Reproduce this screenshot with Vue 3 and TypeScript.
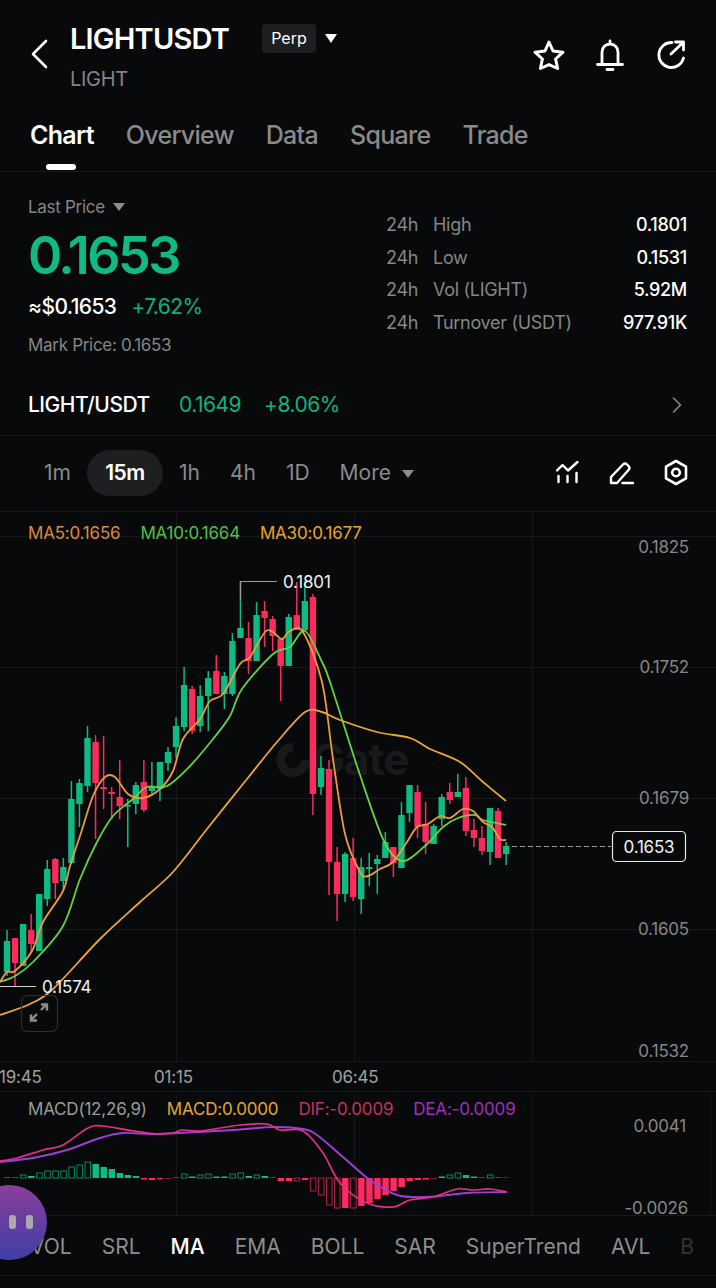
<script setup lang="ts">
type Candle = [number, number, number, number, number, number]
// index, wick top, body top, body bottom, wick bottom, 1 = green / 0 = red
const raw: Candle[] = [
  [0,931,942,973,977,1],[1,939,939,964,987,0],[2,925,925,967,967,1],[3,915,931,945,953,0],[4,895,895,952,952,1],
  [5,861,870,900,907,1],[6,859,860,884,900,0],[7,859,868,882,892,1],[8,782,800,864,865,1],[9,780,784,805,828,1],
  [10,727,739,787,793,1],[11,736,743,784,840,0],[12,737,788,790,810,0],[13,788,793,795,820,0],[14,761,798,807,820,0],
  [15,800,806,807,848,1],[16,783,786,805,815,1],[17,761,783,811,813,0],[18,763,787,792,795,1],[19,763,763,790,802,1],
  [20,748,753,764,772,1],[21,718,727,748,759,1],[22,668,686,728,732,1],[23,687,690,732,735,0],[24,686,697,727,733,1],
  [25,672,679,697,732,1],[26,656,672,695,695,0],[27,673,677,695,710,1],[28,634,642,695,697,1],[29,582,629,639,639,1],
  [30,623,639,662,675,0],[31,603,616,662,662,1],[32,602,612,619,648,0],[33,617,620,637,652,0],[34,640,640,667,702,0],
  [35,615,618,667,667,1],[36,583,616,631,631,0],[37,582,602,631,631,1],[38,595,598,795,816,0],[39,757,769,788,796,1],
  [40,761,770,863,896,0],[41,848,863,895,922,0],[42,853,855,895,903,1],[43,839,859,898,902,0],[44,859,868,900,915,1],
  [45,854,868,870,887,1],[46,856,860,865,895,1],[47,833,843,859,859,1],[48,848,848,864,878,0],[49,803,816,869,869,1],
  [50,786,786,814,823,1],[51,786,793,828,839,0],[52,803,825,843,855,0],[53,825,827,845,845,1],[54,795,798,820,827,1],
  [55,784,793,801,805,0],[56,775,793,798,798,1],[57,778,789,832,837,0],[58,820,831,839,848,0],[59,827,839,852,856,0],
  [60,809,809,853,866,1],[61,809,812,859,859,0],[62,843,847,855,866,1],
]
const GREEN = '#0fbb83'
const RED = '#fb2b5e'
const candles = raw.map(([i, wt, bt, bb, wb, g]) => ({
  x: 7 + 8.05 * i, wt, bt, bb: Math.max(bb, bt + 1.5), wb, c: g ? GREEN : RED,
}))

type P = [number, number]
function smooth(pts: P[], t = 0.16): string {
  let d = `M${pts[0][0]} ${pts[0][1]}`
  for (let i = 0; i < pts.length - 1; i++) {
    const p0 = pts[Math.max(i - 1, 0)]
    const p1 = pts[i]
    const p2 = pts[i + 1]
    const p3 = pts[Math.min(i + 2, pts.length - 1)]
    const c1x = p1[0] + (p2[0] - p0[0]) * t
    const c1y = p1[1] + (p2[1] - p0[1]) * t
    const c2x = p2[0] - (p3[0] - p1[0]) * t
    const c2y = p2[1] - (p3[1] - p1[1]) * t
    d += ` C${c1x.toFixed(1)} ${c1y.toFixed(1)} ${c2x.toFixed(1)} ${c2y.toFixed(1)} ${p2[0]} ${p2[1]}`
  }
  return d
}
const ma30 = smooth([[0,1016],[30,1005],[53,990],[100,940],[140,903],[173,873],[207,830],[247,780],[277,743],[305,713],[322,713],[340,721],[377,733],[410,739],[430,750],[460,763],[483,783],[506,802]])
const ma10 = smooth([[0,983],[15,977],[33,963],[63,927],[80,880],[97,843],[113,817],[133,800],[147,788],[167,787],[190,767],[213,740],[230,717],[242,690],[273,655],[290,648],[305,632],[322,663],[330,683],[358,770],[383,840],[402,862],[425,847],[443,828],[458,819],[475,816],[483,821],[506,826]])
const ma5 = smooth([[0,983],[7,973],[15,972],[32,952],[43,923],[63,892],[70,867],[80,837],[93,797],[105,778],[115,778],[128,795],[143,799],[160,790],[173,772],[183,740],[200,720],[210,702],[223,695],[240,665],[250,658],[265,633],[273,633],[282,640],[290,632],[303,633],[322,683],[333,760],[345,835],[360,873],[368,877],[380,870],[393,863],[407,843],[417,828],[428,825],[440,817],[450,819],[463,810],[473,812],[483,823],[492,828],[500,840],[506,841]])
const dif = smooth([[0,1161],[17,1158],[43,1150],[63,1145],[88,1128],[103,1126],[133,1131],[157,1134],[173,1133],[182,1130],[200,1131],[240,1125],[267,1124],[280,1130],[303,1131],[323,1153],[340,1183],[367,1203],[393,1207],[410,1200],[433,1197],[457,1189],[473,1190],[490,1189],[507,1192]])
const dea = smooth([[0,1162],[33,1158],[67,1150],[100,1138],[123,1133],[157,1134],[233,1130],[273,1127],[303,1129],[317,1135],[343,1157],[370,1180],[397,1195],[427,1197],[467,1193],[507,1192]])

// histogram: signed height, h = hollow
const histRaw: (number | string)[] = [
  0.6,0.6,'3',2,'5','7','7','7','11','13','16',14,11,9,5,3,2,-1.5,-2,-1,-0.5,0.5,'4',1.5,'3','4',1.5,1.5,'4','5',2,'3',2,0.5,
  -3,-3,'-3',-2,'-13','-17','-27','-30',-30,'-30',-28,-25,-21,-17,-13,-9,-3,-2,-1.5,-0.5,1.5,'3','5',3,1.5,0.5,'3',0.5,0.3,
]
const hist = histRaw.map((v, i) => {
  const hollow = typeof v === 'string'
  const n = Number(v)
  const base = n >= 0 ? 1178 - n : 1178
  return { x: 7 + 8.05 * i - 3, y: base, h: Math.abs(n), hollow, c: n >= 0 ? GREEN : RED }
})

const tabs = ['Chart', 'Overview', 'Data', 'Square', 'Trade']
const stats = [
  ['High', '0.1801'], ['Low', '0.1531'], ['Vol (LIGHT)', '5.92M'], ['Turnover (USDT)', '977.91K'],
]
const intervals = ['1m', '15m', '1h', '4h', '1D']
const indicators = ['VOL', 'SRL', 'MA', 'EMA', 'BOLL', 'SAR', 'SuperTrend', 'AVL', 'B']
const axis: [string, number][] = [['0.1825', 554], ['0.1752', 674], ['0.1679', 805], ['0.1605', 936], ['0.1532', 1058]]
const gridH = [537, 668, 799, 930]
const gridV = [176, 354, 532]
const times: [string, number][] = [['19:45', -1], ['01:15', 154], ['06:45', 332]]
</script>

<template>
  <div class="page">
    <header class="head">
      <svg class="back" width="18" height="30" viewBox="0 0 18 30" fill="none"><path d="M16 2 3 15l13 13" stroke="#fff" stroke-width="2.6" stroke-linecap="round" stroke-linejoin="round"/></svg>
      <div class="title-block">
        <div class="title-row">
          <span class="title">LIGHTUSDT</span>
          <span class="perp">Perp</span>
          <span class="tri tri-white"></span>
        </div>
        <div class="subtitle">LIGHT</div>
      </div>
      <div class="head-icons">
        <svg width="32" height="32" viewBox="0 0 32 32" fill="none"><path d="M16 3l4 9 10 1.2-7.4 6.8 2 9.5L16 25.6l-8.6 3.9 2-9.5L2 13.2 12 12z" stroke="#fff" stroke-width="3" stroke-linejoin="round"/></svg>
        <svg width="30" height="32" viewBox="0 0 30 32" fill="none"><path d="M7 25V13a8 8 0 0 1 16 0v12M2.5 25.500h25M12 30.500h6M15 2v3" stroke="#fff" stroke-width="2.800" stroke-linecap="round"/></svg>
        <svg width="32" height="32" viewBox="0 0 32 32" fill="none"><path d="M17 3.500A12.500 12.500 0 1 0 28.500 19M16 15 28 3.500M20.500 3h8v8" stroke="#fff" stroke-width="2.800" stroke-linecap="round" stroke-linejoin="round"/></svg>
      </div>
    </header>

    <nav class="tabs">
      <span v-for="(t, i) in tabs" :key="t" class="tab" :class="{ active: i === 0 }">{{ t }}</span>
    </nav>

    <section class="stats">
      <div class="stat-left">
        <div class="muted last">Last Price <span class="tri tri-grey small"></span></div>
        <div class="price">0.1653</div>
        <div class="sub"><span class="usd">≈$0.1653</span><span class="green">+7.62%</span></div>
        <div class="muted mark">Mark Price: 0.1653</div>
      </div>
      <div class="stat-right">
        <div v-for="s in stats" :key="s[0]" class="stat-row">
          <span class="h24">24h</span><span class="stat-name">{{ s[0] }}</span><span class="stat-val">{{ s[1] }}</span>
        </div>
      </div>
    </section>

    <section class="pair">
      <span class="pair-name">LIGHT/USDT</span>
      <span class="green pair-price">0.1649</span>
      <span class="green">+8.06%</span>
      <svg class="pair-arrow" width="12" height="18" viewBox="0 0 12 18" fill="none"><path d="M2.500 2l7 7-7 7" stroke="#8a8a8a" stroke-width="1.600" stroke-linecap="round" stroke-linejoin="round"/></svg>
    </section>

    <section class="intervals">
      <span v-for="(v, i) in intervals" :key="v" class="iv" :class="{ on: i === 1 }">{{ v }}</span>
      <span class="iv more">More <span class="tri tri-grey"></span></span>
      <div class="iv-icons">
        <svg width="24" height="23" viewBox="0 0 24 23" fill="none" stroke="#fff" stroke-width="2.400" stroke-linecap="round" stroke-linejoin="round"><path d="M1 9.500 6.500 4l5.500 5.500L21.500 1"/><path d="M2.500 15v6M11.500 15v6M20.500 12v9"/></svg>
        <svg width="26" height="24" viewBox="0 0 26 24" fill="none" stroke="#fff" stroke-width="2.400" stroke-linecap="round" stroke-linejoin="round"><path d="M2 22v-6L14 3.500q2-2 4 0l1.500 1.500q2 2 0 4L8 22zM13.500 22H24"/></svg>
        <svg width="24" height="27" viewBox="0 0 24 27" fill="none" stroke="#fff" stroke-width="2.600" stroke-linejoin="round"><path d="M12 2l10 5.700v11.600L12 25 2 19.300V7.700z"/><circle cx="12" cy="13.500" r="3.800"/></svg>
      </div>
    </section>

    <section class="chart">
      <svg class="canvas" width="716" height="579" viewBox="0 513 716 579">
        <g stroke="#17181a" stroke-width="1">
          <line v-for="y in gridH" :key="y" x1="0" x2="716" :y1="y + 0.5" :y2="y + 0.5"/>
          <line v-for="x in gridV" :key="x" :x1="x + 0.5" :x2="x + 0.5" y1="513" y2="1062"/>
          <line x1="0" x2="716" y1="1062.500" y2="1062.500"/>
        </g>
        <g fill="#17191b">
          <path d="M293 744a17 17 0 1 0 17 17h-9a8 8 0 1 1-8-8z"/>
          <text x="312" y="776" font-size="44" font-weight="700" class="wm">Gate</text>
        </g>
        <g v-for="(c, i) in candles" :key="i">
          <line :x1="c.x" :x2="c.x" :y1="c.wt" :y2="c.wb" :stroke="c.c" stroke-width="1.500"/>
          <rect :x="c.x - 3.200" :y="c.bt" width="6.400" :height="c.bb - c.bt" :fill="c.c"/>
        </g>
        <path :d="ma30" fill="none" stroke="#eda535" stroke-width="1.800"/>
        <path :d="ma10" fill="none" stroke="#67d13f" stroke-width="1.800"/>
        <path :d="ma5" fill="none" stroke="#ee9a3f" stroke-width="1.800"/>

        <path d="M240.500 600V582.500H277" fill="none" stroke="#9a9a9a" stroke-width="1.200"/>
        <text x="283" y="589" class="lbl white">0.1801</text>
        <line x1="0" x2="36" y1="987.500" y2="987.500" stroke="#cfcfcf" stroke-width="1.200"/>
        <text x="42" y="994" class="lbl white">0.1574</text>

        <rect x="21.500" y="996.500" width="36" height="36" rx="6" fill="none" stroke="#2b2c2e" stroke-width="1.200"/>
        <path d="M31 1021l6-6M31 1015.500v6h6M41 1011l6-6M41 1005.500h6v6" transform="translate(0 0)" fill="none" stroke="#8d8d8d" stroke-width="2.400"/>

        <text v-for="a in axis" :key="a[0]" x="689" :y="a[1]" text-anchor="end" class="lbl axis">{{ a[0] }}</text>
        <line x1="512" x2="611" y1="847.500" y2="847.500" stroke="#9c9c9c" stroke-width="1.200" stroke-dasharray="5 3"/>
        <rect x="612.500" y="832.500" width="73" height="30" rx="4" fill="#08090a" stroke="#e6e6e6" stroke-width="1.200"/>
        <text x="649" y="854" text-anchor="middle" class="lbl white">0.1653</text>
        <text v-for="t in times" :key="t[0]" :x="t[1]" y="1084" class="lbl time">{{ t[0] }}</text>
      </svg>
      <div class="legend">
        <span class="ma5">MA5:0.1656</span><span class="ma10">MA10:0.1664</span><span class="ma30">MA30:0.1677</span>
      </div>
    </section>

    <section class="macd">
      <svg class="canvas" width="716" height="124" viewBox="0 1092 716 124">
        <g stroke="#151618" stroke-width="1">
          <line v-for="x in gridV" :key="x" :x1="x + 0.5" :x2="x + 0.5" y1="1093" y2="1216"/>
          <line x1="710.500" x2="710.500" y1="1093" y2="1216"/>
        </g>
        <g v-for="(b, i) in hist" :key="i">
          <rect v-if="b.hollow" :x="b.x + 0.5" :y="b.y" width="5.500" :height="b.h" fill="none" :stroke="b.c" stroke-opacity="0.7" stroke-width="1"/>
          <rect v-else :x="b.x" :y="b.y" width="6.400" :height="b.h" :fill="b.c"/>
        </g>
        <path :d="dea" fill="none" stroke="#9b3fd6" stroke-width="1.900"/>
        <path :d="dif" fill="none" stroke="#e42f86" stroke-width="1.700"/>
        <text x="686" y="1132" text-anchor="end" class="lbl axis">0.0041</text>
        <text x="688" y="1214" text-anchor="end" class="lbl axis">-0.0026</text>
      </svg>
      <div class="legend macd-legend">
        <span class="m0">MACD(12,26,9)</span><span class="m1">MACD:0.0000</span><span class="m2">DIF:-0.0009</span><span class="m3">DEA:-0.0009</span>
      </div>
    </section>

    <section class="inds">
      <span v-for="n in indicators" :key="n" class="ind" :class="{ on: n === 'MA', fade: n === 'B' }">{{ n }}</span>
    </section>

    <div class="blob"><i></i><i></i></div>
  </div>
</template>

<style>
html, body { margin: 0; background: #08090a; }
</style>

<style scoped>
.page {
  position: relative;
  width: 716px;
  height: 1288px;
  overflow: hidden;
  background: #08090a;
  color: #fff;
  font-family: Inter, "Liberation Sans", sans-serif;
}
.head {
  height: 112px;
  box-sizing: border-box;
  padding: 20px 29px 0 30px;
  display: flex;
  align-items: flex-start;
}
.back { margin: 19px 0 0 0; flex: none; }
.title-block { margin-left: 22px; }
.title-row { display: flex; align-items: center; height: 36px; }
.title { font-size: 29px; font-weight: 600; letter-spacing: -0.8px; width: 192px; }
.perp {
  background: #1d1e20;
  border-radius: 4px;
  font-size: 16px;
  line-height: 29px;
  width: 54px;
  text-align: center;
}
.tri {
  display: inline-block;
  width: 0;
  height: 0;
  border-left: 6px solid transparent;
  border-right: 6px solid transparent;
}
.tri-white { border-top: 9px solid #fff; margin-left: 9px; }
.tri-grey { border-top: 8px solid #8d8d8d; margin-left: 5px; vertical-align: 2px; }
.tri-grey.small { border-left-width: 6px; border-right-width: 6px; margin-left: 4px; }
.subtitle { color: #858585; font-size: 20px; margin-top: 11px; letter-spacing: -0.3px; }
.head-icons { margin-left: auto; margin-top: 19px; display: flex; gap: 30px; }
.tabs {
  height: 60px;
  box-sizing: border-box;
  padding: 0 0 13px 30px;
  border-bottom: 1px solid #17181a;
  display: flex;
  align-items: center;
  gap: 32px;
  font-size: 25px;
  letter-spacing: -0.7px;
}
.tab { color: #8a8a8a; font-weight: 500; position: relative; }
.tab.active { color: #fff; font-weight: 600; }
.tab.active::after {
  content: "";
  position: absolute;
  left: 16px;
  width: 30px;
  height: 6px;
  bottom: -20px;
  border-radius: 3px;
  background: #fff;
}
.stats {
  height: 208px;
  box-sizing: border-box;
  padding: 0 29px 0 28px;
  display: flex;
  justify-content: space-between;
}
.muted { color: #868686; font-size: 17px; letter-spacing: -0.3px; }
.last { margin-top: 24px; line-height: 22px; }
.price {
  color: #0fbb83;
  font-size: 52px;
  font-weight: 600;
  letter-spacing: -2.500px;
  line-height: 54px;
  margin-top: 11px;
}
.sub { font-size: 21px; margin-top: 9px; display: flex; gap: 15px; line-height: 30px; letter-spacing: -0.6px; }
.usd { font-weight: 500; }
.green { color: #0fb27c; }
.mark { margin-top: 12px; line-height: 22px; }
.stat-right { width: 301px; padding-top: 36px; }
.stat-row { display: flex; height: 32.700px; align-items: center; font-size: 18px; letter-spacing: -0.3px; }
.h24 { color: #868686; width: 47px; }
.stat-name { color: #868686; }
.stat-val { margin-left: auto; font-weight: 500; }
.pair {
  height: 56px;
  box-sizing: border-box;
  padding: 0 33px 6px 28px;
  border-bottom: 1px solid #17181a;
  display: flex;
  align-items: center;
  font-size: 21px;
  letter-spacing: -0.5px;
}
.pair-name { font-weight: 500; width: 151px; }
.pair-price { width: 85px; }
.pair-arrow { margin-left: auto; }
.intervals {
  height: 76px;
  box-sizing: border-box;
  border-bottom: 1px solid #17181a;
  padding: 0 28px 2px 44px;
  display: flex;
  align-items: center;
  gap: 30px;
  font-size: 21px;
  color: #8a8a8a;
}
.iv.on {
  color: #fff;
  font-weight: 600;
  background: #1e1f21;
  border-radius: 23px;
  width: 76px;
  line-height: 46px;
  text-align: center;
  margin: 0 -14px;
  letter-spacing: -0.5px;
}
.more { white-space: nowrap; }
.iv-icons { margin-left: auto; display: flex; align-items: center; gap: 29px; }
.chart { position: relative; height: 579px; }
.canvas { display: block; position: absolute; left: 0; top: 0; }
.wm { font-family: Inter, "Liberation Sans", sans-serif; letter-spacing: -1px; }
.lbl { font-size: 17px; letter-spacing: -0.2px; font-family: Inter, "Liberation Sans", sans-serif; }
.white { fill: #f2f2f2; }
.axis { fill: #868686; }
.time { fill: #a0a0a0; }
.legend {
  position: absolute;
  left: 28px;
  top: 9px;
  display: flex;
  gap: 20px;
  font-size: 17px;
  line-height: 24px;
  letter-spacing: -0.2px;
}
.ma5 { color: #d98b42; }
.ma10 { color: #54c046; }
.ma30 { color: #e6a62e; }
.macd {
  position: relative;
  height: 125px;
  border-top: 1px solid #17181a;
  border-bottom: 1px solid #17181a;
  box-sizing: border-box;
  height: 125px;
}
.macd-legend { top: 5px; }
.m0 { color: #9a9a9a; }
.m1 { color: #e0a82e; }
.m2 { color: #c5305f; }
.m3 { color: #9f2fbe; }
.inds {
  height: 60px;
  border-bottom: 1px solid #17181a;
  box-sizing: border-box;
  padding: 2px 0 0 30px;
  display: flex;
  align-items: center;
  gap: 30px;
  font-size: 21px;
  color: #8e8e8e;
  white-space: nowrap;
  overflow: hidden;
}
.ind { flex: none; }
.ind.on { color: #fff; font-weight: 500; }
.ind.fade { color: #333; }
.blob {
  position: absolute;
  left: -28px;
  top: 1185px;
  width: 75px;
  height: 75px;
  border-radius: 50%;
  background: linear-gradient(180deg, #8b3f98 0%, #3e3ea8 100%);
}
.blob i {
  position: absolute;
  top: 30px;
  width: 7px;
  height: 14px;
  border-radius: 3px;
  background: #a9a9b0;
}
.blob i:first-child { left: 37px; }
.blob i:last-child { left: 54px; }
</style>
